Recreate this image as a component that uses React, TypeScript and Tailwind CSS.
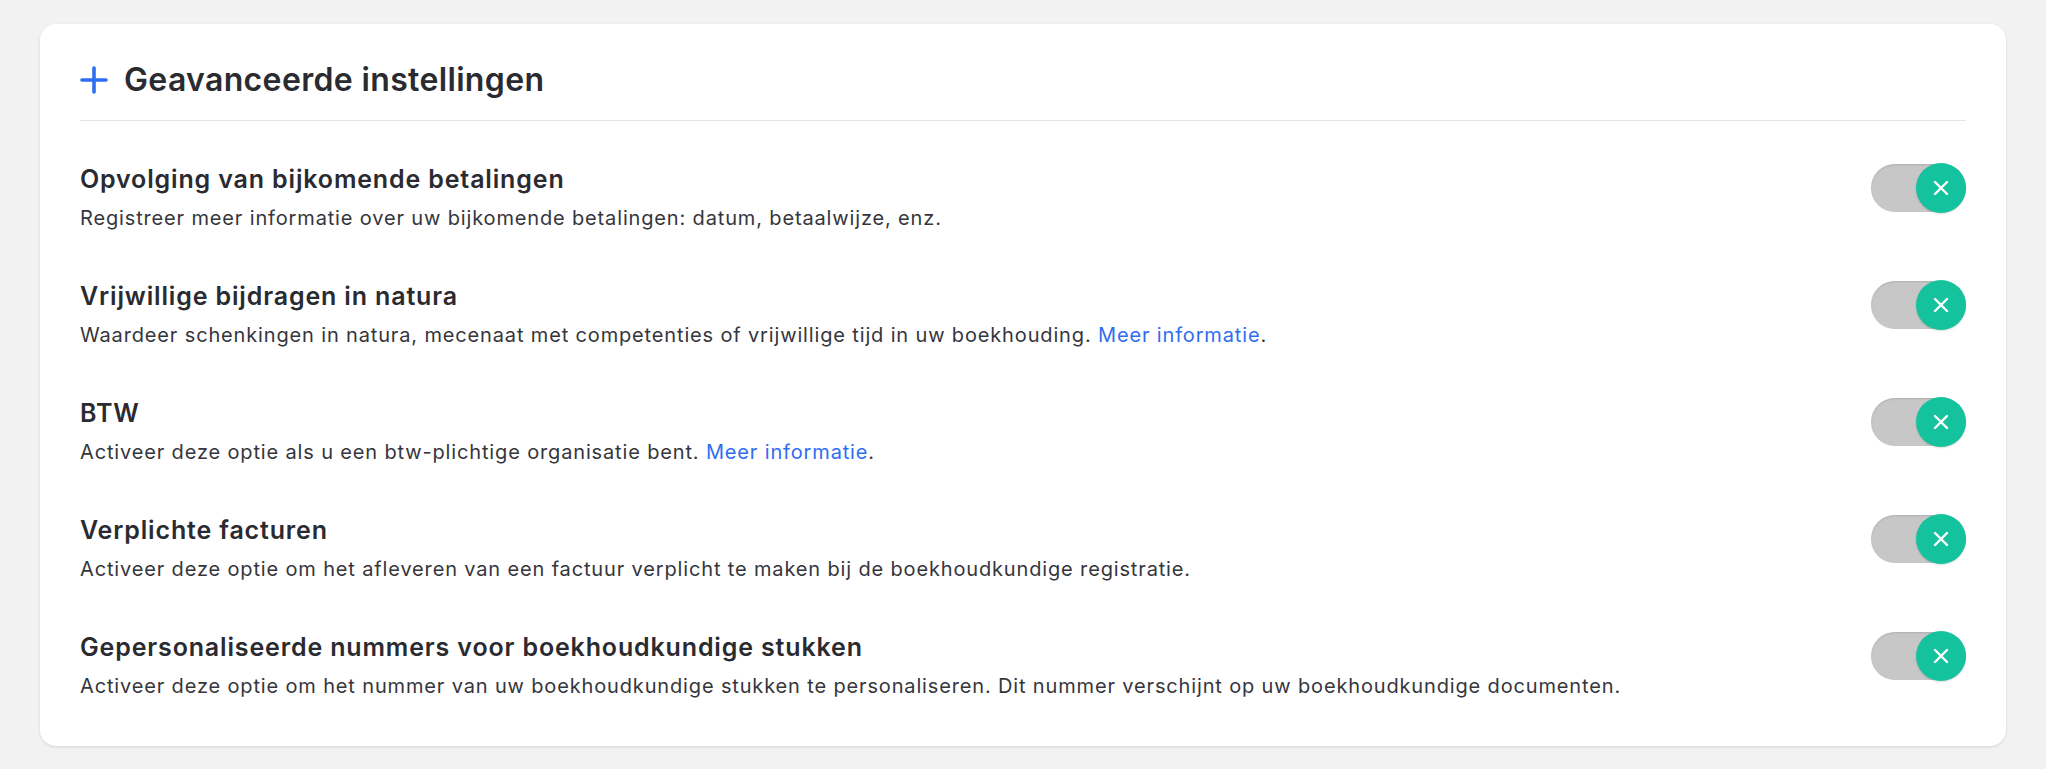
import React from "react";

const rows: { title: string; desc: string; link?: boolean }[] = [
  {
    title: "Opvolging van bijkomende betalingen",
    desc: "Registreer meer informatie over uw bijkomende betalingen: datum, betaalwijze, enz.",
  },
  {
    title: "Vrijwillige bijdragen in natura",
    desc: "Waardeer schenkingen in natura, mecenaat met competenties of vrijwillige tijd in uw boekhouding.",
    link: true,
  },
  {
    title: "BTW",
    desc: "Activeer deze optie als u een btw-plichtige organisatie bent.",
    link: true,
  },
  {
    title: "Verplichte facturen",
    desc: "Activeer deze optie om het afleveren van een factuur verplicht te maken bij de boekhoudkundige registratie.",
  },
  {
    title: "Gepersonaliseerde nummers voor boekhoudkundige stukken",
    desc: "Activeer deze optie om het nummer van uw boekhoudkundige stukken te personaliseren. Dit nummer verschijnt op uw boekhoudkundige documenten.",
  },
];

function Toggle() {
  return (
    <div className="relative h-[50px] w-[95px] shrink-0">
      <div className="absolute inset-x-0 top-[1px] h-[48px] rounded-full bg-[#c7c7c7] shadow-[inset_0_1px_2px_rgba(0,0,0,0.12)]" />
      <div className="absolute right-0 top-0 flex h-[50px] w-[50px] items-center justify-center rounded-full bg-[#14c39d] shadow-[0_1px_2px_rgba(0,0,0,0.15)]">
        <svg width="18" height="18" viewBox="0 0 18 18" fill="none">
          <path d="M3 3L15 15M15 3L3 15" stroke="white" strokeWidth="2.4" strokeLinecap="round" />
        </svg>
      </div>
    </div>
  );
}

export default function App() {
  return (
    <div
      className="min-h-[769px] w-full bg-[#f2f2f2] px-[40px] pt-[24px]"
      style={{ fontFamily: "Inter, 'Noto Sans', sans-serif" }}
    >
      <div className="rounded-[16px] bg-white px-[40px] pb-[46px] pt-[36px] shadow-[0_1px_3px_rgba(0,0,0,0.12)]">
        <div className="flex items-center gap-[16px] border-b border-[#e3e3e3] pb-[20px]">
          <svg width="28" height="28" viewBox="0 0 28 28" fill="none">
            <path d="M14 2V26M2 14H26" stroke="#2f6df0" strokeWidth="3.6" strokeLinecap="round" />
          </svg>
          <h1 className="text-[32px] font-semibold leading-[40px] tracking-[0.35px] text-[#2a2b31]">
            Geavanceerde instellingen
          </h1>
        </div>
        <div className="mt-[42px] flex flex-col gap-[48px]">
          {rows.map((r) => (
            <div key={r.title} className="flex items-start justify-between gap-6">
              <div>
                <div className="text-[25px] font-semibold leading-[32px] tracking-[0.85px] text-[#2a2b31]">{r.title}</div>
                <div className="mt-[9px] text-[20px] leading-[28px] tracking-[0.85px] text-[#35363c]">
                  {r.desc}
                  {r.link && (
                    <>
                      {" "}
                      <a className="text-[#2f6df0]">Meer informatie</a>.
                    </>
                  )}
                </div>
              </div>
              <Toggle />
            </div>
          ))}
        </div>
      </div>
    </div>
  );
}
